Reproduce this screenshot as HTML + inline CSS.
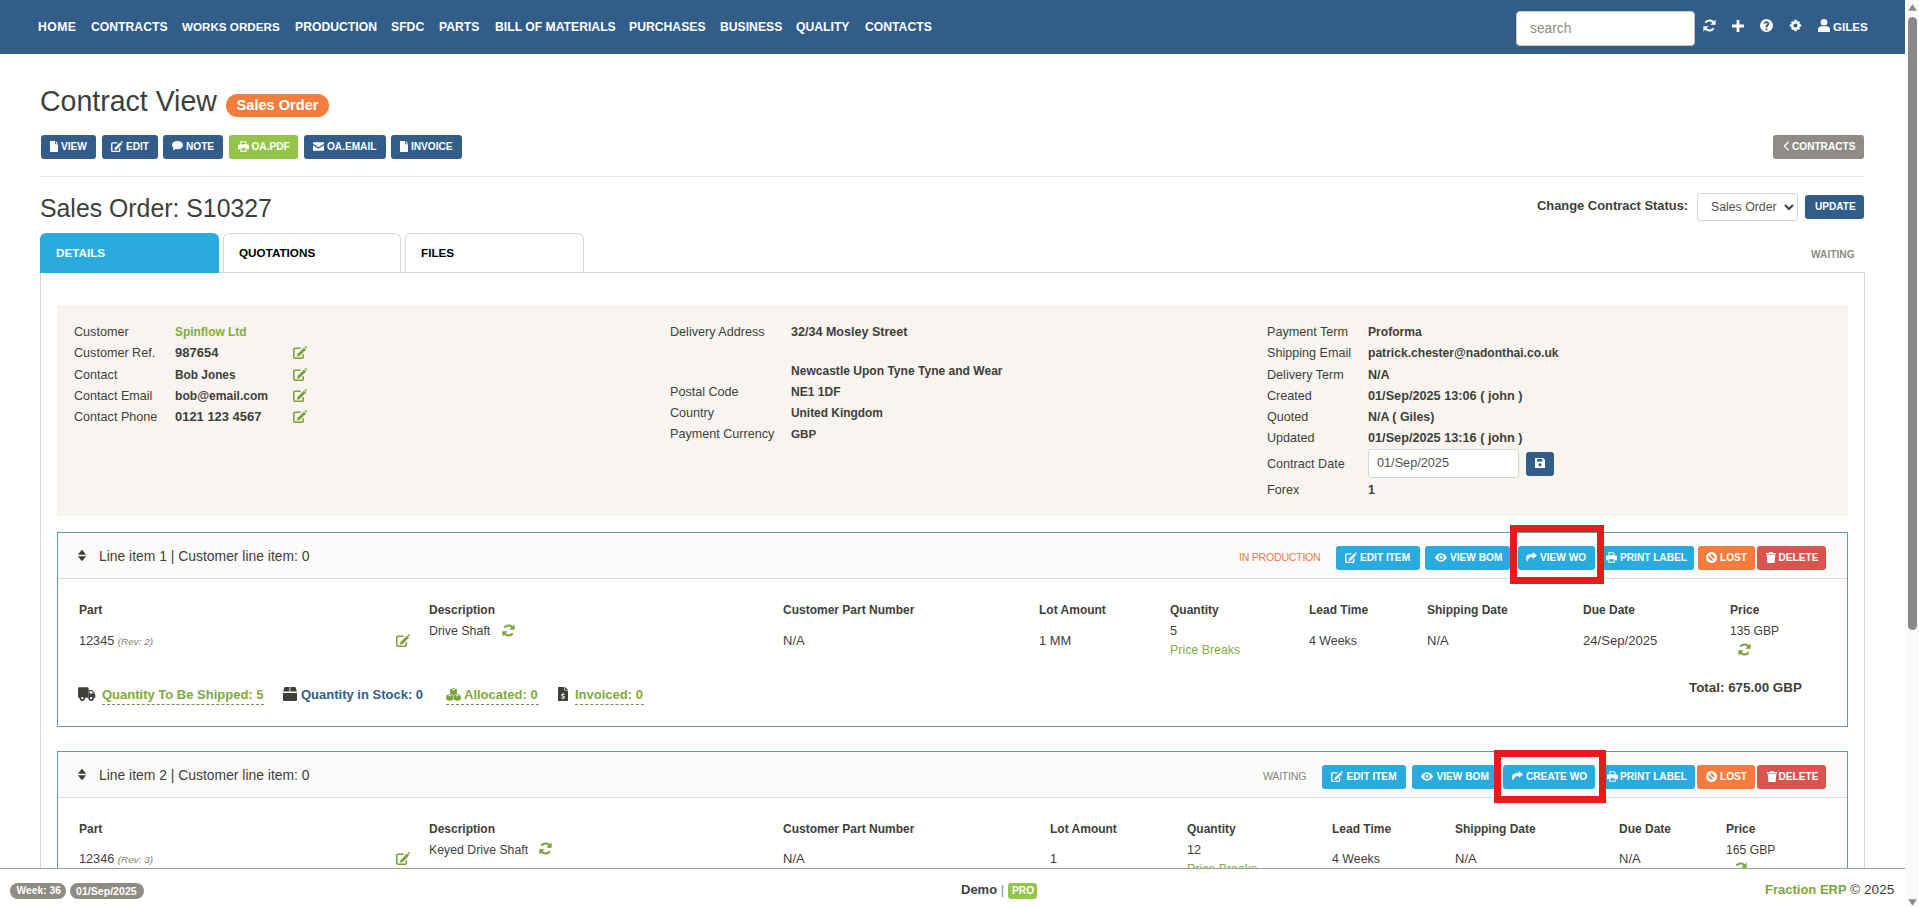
<!DOCTYPE html>
<html><head><meta charset="utf-8">
<style>
*{box-sizing:border-box;margin:0;padding:0}
html,body{width:1919px;height:907px;overflow:hidden;background:#fff;font-family:"Liberation Sans",sans-serif;color:#3e3f3a}
.a{position:absolute;white-space:nowrap}
svg.a{display:block;overflow:visible}
.nv{position:absolute;top:18px;line-height:18px;font-size:12.2px;font-weight:bold;color:#fff;white-space:nowrap}
.btn{position:absolute;border-radius:3px}
.bt{position:absolute;color:#fff;font-weight:bold;white-space:nowrap}
.b-p{background:#325d88}.b-s{background:#93c54b}.b-i{background:#29abe0}.b-w{background:#f47c3c}.b-d{background:#d9534f}.b-g{background:#8e8c84}
.lbl{position:absolute;font-size:12.6px;white-space:nowrap;color:#3e3f3a}
.val{position:absolute;font-size:12.4px;white-space:nowrap;font-weight:bold;color:#3e3f3a}
.th{position:absolute;font-size:12.0px;white-space:nowrap;font-weight:bold;color:#3e3f3a}
.td{position:absolute;font-size:12.7px;white-space:nowrap;color:#3e3f3a}
.grn{color:#82ad3e}
</style></head><body>

<svg width="0" height="0" style="position:absolute">
<defs>
<symbol id="i-file" viewBox="0 0 8 11"><path d="M0 0H5V3.2H8V11H0Z"/><path d="M5.7 0L8 2.4H5.7Z"/></symbol>
<symbol id="i-edit" viewBox="0 0 14 13"><path d="M10.2 8.2V11.2Q10.2 12.2 9.2 12.2H1.8Q0.8 12.2 0.8 11.2V3.3Q0.8 2.3 1.8 2.3H7.6" fill="none" stroke="currentColor" stroke-width="1.6"/><path d="M3.9 10.7L4.5 7.9L11 1.4L13.1 3.5L6.6 10Z"/><path d="M11.6 0.8L12.3 0.1Q12.6 -0.1 12.9 0.2L13.9 1.2Q14.1 1.5 13.9 1.8L13.2 2.5Z"/></symbol>
<symbol id="i-comment" viewBox="0 0 11 10"><ellipse cx="5.5" cy="4.2" rx="5.5" ry="4.1"/><path d="M1.6 6.4L0.8 9.6L4.6 7.8Z"/></symbol>
<symbol id="i-print" viewBox="0 0 11 11"><path d="M2.3 0.3H7.4L8.7 1.6V4H2.3Z M3.3 1.2V3.4H7.7V1.9L7 1.2Z" fill-rule="evenodd"/><path d="M1 3.6H10A1 1 0 0 1 11 4.6V8.2H8.7V6.6H2.3V8.2H0V4.6A1 1 0 0 1 1 3.6Z"/><path d="M2.3 6.2H8.7V10.8H2.3Z M3.3 7.2V9.8H7.7V7.2Z" fill-rule="evenodd"/></symbol>
<symbol id="i-envelope" viewBox="0 0 11 9"><path d="M0 0.3H11V1.8L5.5 5.3L0 1.8Z"/><path d="M0 3.2L5.5 6.7L11 3.2V8.7H0Z"/></symbol>
<symbol id="i-chev" viewBox="0 0 6 10"><path d="M5.2 0.2L6 1.2L2.2 5L6 8.8L5.2 9.8L0.4 5Z"/></symbol>
<symbol id="i-refresh" viewBox="0 0 13 13"><path d="M11.2 5.2A5 5 0 0 0 2.3 3.6" fill="none" stroke="currentColor" stroke-width="2"/><path d="M12.6 0.6V5.8H7.4Z"/><path d="M1.8 7.8A5 5 0 0 0 10.7 9.4" fill="none" stroke="currentColor" stroke-width="2"/><path d="M0.4 12.4V7.2H5.6Z"/></symbol>
<symbol id="i-plus" viewBox="0 0 12 12"><path d="M4.6 0H7.4V4.6H12V7.4H7.4V12H4.6V7.4H0V4.6H4.6Z"/></symbol>
<symbol id="i-question" viewBox="0 0 14 14"><path d="M7 0A7 7 0 1 1 7 14A7 7 0 1 1 7 0Z M6 10.2V12H8V10.2Z M7 2.4C5.2 2.4 4.2 3.4 4 4.8L5.9 5.2C6 4.6 6.3 4.2 7 4.2C7.6 4.2 8 4.6 8 5.1C8 6 6 6.3 6 8.2V9.2H8V8.6C8 7.4 10 7 10 5C10 3.4 8.7 2.4 7 2.4Z" fill-rule="evenodd"/></symbol>
<symbol id="i-cog" viewBox="0 0 14 14"><path d="M5.8 0H8.2L8.6 2.1L10.2 1.2L11.9 2.9L11 4.5L13.1 4.9V7.3L11 7.7L11.9 9.3L10.2 11L8.6 10.1L8.2 12.2H5.8L5.4 10.1L3.8 11L2.1 9.3L3 7.7L0.9 7.3V4.9L3 4.5L2.1 2.9L3.8 1.2L5.4 2.1Z M7 3.9A2.2 2.2 0 1 0 7 8.3A2.2 2.2 0 1 0 7 3.9Z" fill-rule="evenodd" transform="translate(0 0.9)"/></symbol>
<symbol id="i-user" viewBox="0 0 12 13"><circle cx="6" cy="3.3" r="3.3"/><path d="M0 13V10.6C0 8.6 1.6 7.2 3.4 7.2H8.6C10.4 7.2 12 8.6 12 10.6V13Z"/></symbol>
<symbol id="i-sort" viewBox="0 0 8 11"><path d="M3.3 0.4Q4 -0.2 4.7 0.4L7.8 4.2Q8 4.7 7.5 4.7H0.5Q0 4.7 0.2 4.2Z"/><path d="M3.3 10.6Q4 11.2 4.7 10.6L7.8 6.8Q8 6.3 7.5 6.3H0.5Q0 6.3 0.2 6.8Z"/></symbol>
<symbol id="i-truck" viewBox="0 0 18 14"><path d="M1 0.2H9.6Q10.6 0.2 10.6 1.2V10.8H1Q0 10.8 0 9.8V1.2Q0 0.2 1 0.2Z"/><path d="M10.6 3H13.6Q14.2 3 14.6 3.5L16.8 6.2Q17.2 6.7 17.2 7.3V9.8L17.9 10.8H10.6Z M11.6 4H13.4L15.6 6.6H11.6Z" fill-rule="evenodd"/><circle cx="4.3" cy="11.2" r="2.7"/><circle cx="13.1" cy="11.2" r="2.7"/><circle cx="4.3" cy="11.2" r="1.1" fill="#fff"/><circle cx="13.1" cy="11.2" r="1.1" fill="#fff"/></symbol>
<symbol id="i-box" viewBox="0 0 14 14"><path d="M1.6 0H6.5V4.6H0.1Z"/><path d="M7.4 0H12.4L13.9 4.6H7.4Z"/><path d="M0 6.1H14V13Q14 14 13 14H1Q0 14 0 13Z"/></symbol>
<symbol id="i-cubes" viewBox="0 0 15 13"><path d="M3.8 6L0.2 7.6V11.4L3.8 13L7.3 11.4V7.6Z"/><path d="M11.2 6L7.7 7.6V11.4L11.2 13L14.8 11.4V7.6Z"/><path d="M7.5 0L4 1.6V5.6L7.5 7.2L11 5.6V1.6Z"/><path d="M3.8 8.6L2 7.8L3.8 7L5.6 7.8Z M11.2 8.6L9.4 7.8L11.2 7L13 7.8Z M7.5 2.6L5.7 1.8L7.5 1L9.3 1.8Z" fill="#fff"/></symbol>
<symbol id="i-invoice" viewBox="0 0 10 14"><path d="M0 0H6.4V3.6H10V14H0Z"/><path d="M7 0L10 3H7Z"/><path d="M4.4 6.2H5.6V7C6.3 7.1 6.7 7.5 6.8 8.1L5.9 8.3C5.8 8 5.5 7.8 5 7.8C4.6 7.8 4.3 8 4.3 8.3C4.3 9 6.9 8.6 6.9 10.3C6.9 11 6.4 11.4 5.6 11.5V12.3H4.4V11.5C3.7 11.4 3.2 11 3.1 10.3L4 10.1C4.1 10.5 4.5 10.7 5 10.7C5.5 10.7 5.8 10.5 5.8 10.2C5.8 9.4 3.2 9.8 3.2 8.2C3.2 7.5 3.7 7.1 4.4 7Z" fill="#f8f5f0"/></symbol>
<symbol id="i-eye" viewBox="0 0 13 9"><path d="M6.5 0C9.6 0 12 2.4 13 4.5C12 6.6 9.6 9 6.5 9C3.4 9 1 6.6 0 4.5C1 2.4 3.4 0 6.5 0Z M6.5 1.6A2.9 2.9 0 1 0 6.5 7.4A2.9 2.9 0 1 0 6.5 1.6Z" fill-rule="evenodd"/><circle cx="6.5" cy="4.5" r="1.5"/></symbol>
<symbol id="i-share" viewBox="0 0 12 11"><path d="M7.4 0L12 3.9L7.4 7.8V5.6C4.4 5.6 2.3 6.4 1.6 10.6C0.4 9.2 0 7.8 0 6.6C0 3.8 2.4 2.3 7.4 2.3Z"/></symbol>
<symbol id="i-ban" viewBox="0 0 11 11"><path d="M5.5 0A5.5 5.5 0 1 1 5.5 11A5.5 5.5 0 1 1 5.5 0Z M2.6 3.6A3.8 3.8 0 0 0 7.4 8.4Z M3.6 2.6L8.4 7.4A3.8 3.8 0 0 0 3.6 2.6Z" fill-rule="evenodd"/></symbol>
<symbol id="i-trash" viewBox="0 0 10 11"><path d="M3.3 0H6.7L7 1H10V2.4H0V1H3Z"/><path d="M0.7 3H9.3L8.6 11H1.4Z"/></symbol>
<symbol id="i-save" viewBox="0 0 10 10"><path d="M0 0H8L10 2V10H0Z M2 1V3.6H7.4V1Z M5 5.2A1.6 1.6 0 1 0 5 8.4A1.6 1.6 0 1 0 5 5.2Z" fill-rule="evenodd"/></symbol>
</defs></svg>

<div class="a" style="left:0;top:0;width:1905px;height:54px;background:#325d88"></div>
<div class="nv" style="left:38px;letter-spacing:0.45px">HOME</div>
<div class="nv" style="left:91px;">CONTRACTS</div>
<div class="nv" style="left:182px;font-size:11.65px">WORKS ORDERS</div>
<div class="nv" style="left:295px;">PRODUCTION</div>
<div class="nv" style="left:391px;">SFDC</div>
<div class="nv" style="left:439px;">PARTS</div>
<div class="nv" style="left:495px;">BILL OF MATERIALS</div>
<div class="nv" style="left:629px;">PURCHASES</div>
<div class="nv" style="left:720px;">BUSINESS</div>
<div class="nv" style="left:796px;">QUALITY</div>
<div class="nv" style="left:865px;">CONTACTS</div>
<div class="a" style="left:1516px;top:11px;width:179px;height:35px;background:#fff;border-radius:4px;border:1px solid #c8c6c0"></div>
<div class="a" style="left:1530px;top:19.5px;line-height:18px;font-size:13.8px;color:#8f8d86">search</div>
<svg class="a" style="left:1703px;top:19px;color:#fff" width="13" height="13" viewBox="0 0 13 13"><use href="#i-refresh" fill="#fff"/></svg>
<svg class="a" style="left:1732px;top:19.5px;color:#fff" width="12" height="12" viewBox="0 0 12 12"><use href="#i-plus" fill="#fff"/></svg>
<svg class="a" style="left:1760px;top:19px;color:#fff" width="13" height="13" viewBox="0 0 13 13"><use href="#i-question" fill="#fff"/></svg>
<svg class="a" style="left:1789px;top:19px;color:#fff" width="13" height="13" viewBox="0 0 13 13"><use href="#i-cog" fill="#fff"/></svg>
<svg class="a" style="left:1818px;top:19px;color:#fff" width="12" height="13" viewBox="0 0 12 13"><use href="#i-user" fill="#fff"/></svg>
<div class="nv" style="left:1833px;font-size:11.6px">GILES</div>
<div class="a" style="left:1905px;top:0;width:14px;height:907px;background:#fafafa"></div>
<svg class="a" style="left:1908px;top:4px" width="9" height="7" viewBox="0 0 9 7"><path d="M4.5 0.3L8.8 6.7H0.2Z" fill="#898989"/></svg>
<div class="a" style="left:1908px;top:17px;width:9px;height:613px;background:#898989;border-radius:4.5px"></div>
<svg class="a" style="left:1908px;top:899px" width="9" height="7" viewBox="0 0 9 7"><path d="M0.2 0.3H8.8L4.5 6.7Z" fill="#898989"/></svg>
<div class="a" style="left:40px;top:84px;font-size:30px;line-height:34px;color:#3e3f3a;transform:scaleX(0.95);transform-origin:0 50%">Contract View</div>
<div class="a" style="left:226px;top:94px;width:103px;height:23px;border-radius:12px;background:#f47c3c;color:#fff;font-weight:bold;font-size:14.6px;line-height:23px;text-align:center">Sales Order</div>
<div class="btn b-p" style="left:41px;top:135px;width:55px;height:24px"></div>
<svg class="a" style="left:50px;top:140.5px;color:#fff" width="8" height="11" viewBox="0 0 8 11"><use href="#i-file" fill="#fff"/></svg>
<div class="bt" style="left:61px;top:135px;line-height:24px;font-size:10.1px">VIEW</div>
<div class="btn b-p" style="left:102px;top:135px;width:56px;height:24px"></div>
<svg class="a" style="left:111px;top:140.5px;color:#fff" width="12" height="11" viewBox="0 0 12 11"><use href="#i-edit" fill="#fff"/></svg>
<div class="bt" style="left:126px;top:135px;line-height:24px;font-size:10.1px">EDIT</div>
<div class="btn b-p" style="left:163px;top:135px;width:60px;height:24px"></div>
<svg class="a" style="left:172px;top:141.0px;color:#fff" width="11" height="10" viewBox="0 0 11 10"><use href="#i-comment" fill="#fff"/></svg>
<div class="bt" style="left:186px;top:135px;line-height:24px;font-size:10.1px">NOTE</div>
<div class="btn b-s" style="left:229px;top:135px;width:69px;height:24px"></div>
<svg class="a" style="left:238px;top:140.5px;color:#fff" width="11" height="11" viewBox="0 0 11 11"><use href="#i-print" fill="#fff"/></svg>
<div class="bt" style="left:251.5px;top:135px;line-height:24px;font-size:10.1px">OA.PDF</div>
<div class="btn b-p" style="left:304px;top:135px;width:82px;height:24px"></div>
<svg class="a" style="left:313px;top:141.5px;color:#fff" width="11" height="9" viewBox="0 0 11 9"><use href="#i-envelope" fill="#fff"/></svg>
<div class="bt" style="left:327px;top:135px;line-height:24px;font-size:10.1px">OA.EMAIL</div>
<div class="btn b-p" style="left:391px;top:135px;width:71px;height:24px"></div>
<svg class="a" style="left:400px;top:140.5px;color:#fff" width="8" height="11" viewBox="0 0 8 11"><use href="#i-file" fill="#fff"/></svg>
<div class="bt" style="left:411px;top:135px;line-height:24px;font-size:10.1px">INVOICE</div>
<div class="btn b-g" style="left:1773px;top:135px;width:91px;height:24px"></div>
<svg class="a" style="left:1782.5px;top:141.0px;color:#fff" width="6" height="10" viewBox="0 0 6 10"><use href="#i-chev" fill="#fff"/></svg>
<div class="bt" style="left:1792px;top:135px;line-height:24px;font-size:10.1px">CONTRACTS</div>
<div class="a" style="left:40px;top:176px;width:1824px;height:1px;background:#e6e5e3"></div>
<div class="a" style="left:40px;top:192.5px;font-size:26.5px;line-height:30px;color:#3e3f3a;transform:scaleX(0.937);transform-origin:0 50%">Sales Order: S10327</div>
<div class="val" style="left:1537px;top:197px;line-height:18px;font-size:12.9px">Change Contract Status:</div>
<div class="a" style="left:1697px;top:193px;width:101px;height:28px;border:1px solid #d6d4cf;border-radius:3px;background:#fff"></div>
<div class="td" style="left:1711px;top:198px;line-height:18px;font-size:12.3px;color:#52524c">Sales Order</div>
<svg class="a" style="left:1784px;top:204px" width="10" height="7" viewBox="0 0 10 7"><path d="M1 1L5 5L9 1" fill="none" stroke="#3e3f3a" stroke-width="2"/></svg>
<div class="btn b-p" style="left:1805px;top:195px;width:59px;height:24px"></div>
<div class="bt" style="left:1815px;top:195px;line-height:24px;font-size:10.1px">UPDATE</div>
<div class="a" style="left:40px;top:272px;width:1825px;height:700px;border:1px solid #d7d5d1"></div>
<div class="a" style="left:40px;top:233px;width:179px;height:40px;background:#29abe0;border-radius:6px 6px 0 0"></div>
<div class="a" style="left:223px;top:233px;width:178px;height:39px;border:1px solid #d9d7d3;border-bottom:none;border-radius:6px 6px 0 0;background:#fff"></div>
<div class="a" style="left:405px;top:233px;width:179px;height:39px;border:1px solid #d9d7d3;border-bottom:none;border-radius:6px 6px 0 0;background:#fff"></div>
<div class="a" style="left:56px;top:243.7px;line-height:18px;font-weight:bold;font-size:11.7px;color:#fff">DETAILS</div>
<div class="a" style="left:239px;top:243.7px;line-height:18px;font-weight:bold;font-size:11.7px;color:#000">QUOTATIONS</div>
<div class="a" style="left:421px;top:243.7px;line-height:18px;font-weight:bold;font-size:11.7px;color:#000">FILES</div>
<div class="a" style="left:1811px;top:246.3px;line-height:18px;font-weight:bold;font-size:10.2px;color:#8e8c84">WAITING</div>
<div class="a" style="left:57px;top:305px;width:1791px;height:211px;background:#f8f5f0"></div>
<div class="lbl" style="left:74px;top:323px;line-height:18px;">Customer</div>
<div class="val" style="left:175px;top:323px;line-height:18px;font-size:11.95px;color:#82ad3e">Spinflow Ltd</div>
<div class="lbl" style="left:74px;top:344px;line-height:18px;">Customer Ref.</div>
<div class="val" style="left:175px;top:344px;line-height:18px;font-size:13.0px">987654</div>
<svg class="a" style="left:293px;top:346px;color:#7ba23a" width="14" height="13" viewBox="0 0 14 13"><use href="#i-edit" fill="#7ba23a"/></svg>
<div class="lbl" style="left:74px;top:366px;line-height:18px;">Contact</div>
<div class="val" style="left:175px;top:366px;line-height:18px;font-size:11.85px">Bob Jones</div>
<svg class="a" style="left:293px;top:368px;color:#7ba23a" width="14" height="13" viewBox="0 0 14 13"><use href="#i-edit" fill="#7ba23a"/></svg>
<div class="lbl" style="left:74px;top:387px;line-height:18px;">Contact Email</div>
<div class="val" style="left:175px;top:387px;line-height:18px;font-size:12.1px">bob@email.com</div>
<svg class="a" style="left:293px;top:389px;color:#7ba23a" width="14" height="13" viewBox="0 0 14 13"><use href="#i-edit" fill="#7ba23a"/></svg>
<div class="lbl" style="left:74px;top:408px;line-height:18px;">Contact Phone</div>
<div class="val" style="left:175px;top:408px;line-height:18px;font-size:12.95px">0121 123 4567</div>
<svg class="a" style="left:293px;top:410px;color:#7ba23a" width="14" height="13" viewBox="0 0 14 13"><use href="#i-edit" fill="#7ba23a"/></svg>
<div class="lbl" style="left:670px;top:323px;line-height:18px;">Delivery Address</div>
<div class="val" style="left:791px;top:323px;line-height:18px;font-size:12.55px">32/34 Mosley Street</div>
<div class="val" style="left:791px;top:362px;line-height:18px;font-size:12.05px">Newcastle Upon Tyne Tyne and Wear</div>
<div class="lbl" style="left:670px;top:383px;line-height:18px;">Postal Code</div>
<div class="val" style="left:791px;top:383px;line-height:18px;font-size:12.05px">NE1 1DF</div>
<div class="lbl" style="left:670px;top:404px;line-height:18px;">Country</div>
<div class="val" style="left:791px;top:404px;line-height:18px;font-size:11.9px">United Kingdom</div>
<div class="lbl" style="left:670px;top:425px;line-height:18px;">Payment Currency</div>
<div class="val" style="left:791px;top:425px;line-height:18px;font-size:11.7px">GBP</div>
<div class="lbl" style="left:1267px;top:323px;line-height:18px;">Payment Term</div>
<div class="val" style="left:1368px;top:323px;line-height:18px;font-size:12.1px">Proforma</div>
<div class="lbl" style="left:1267px;top:344px;line-height:18px;">Shipping Email</div>
<div class="val" style="left:1368px;top:344px;line-height:18px;font-size:12.1px">patrick.chester@nadonthai.co.uk</div>
<div class="lbl" style="left:1267px;top:366px;line-height:18px;">Delivery Term</div>
<div class="val" style="left:1368px;top:366px;line-height:18px;font-size:12.6px">N/A</div>
<div class="lbl" style="left:1267px;top:387px;line-height:18px;">Created</div>
<div class="val" style="left:1368px;top:387px;line-height:18px;font-size:12.7px">01/Sep/2025 13:06 ( john )</div>
<div class="lbl" style="left:1267px;top:408px;line-height:18px;">Quoted</div>
<div class="val" style="left:1368px;top:408px;line-height:18px;font-size:12.4px">N/A ( Giles)</div>
<div class="lbl" style="left:1267px;top:429px;line-height:18px;">Updated</div>
<div class="val" style="left:1368px;top:429px;line-height:18px;font-size:12.7px">01/Sep/2025 13:16 ( john )</div>
<div class="lbl" style="left:1267px;top:455px;line-height:18px;">Contract Date</div>
<div class="lbl" style="left:1267px;top:481px;line-height:18px;">Forex</div>
<div class="val" style="left:1368px;top:481px;line-height:18px;font-size:12.4px">1</div>
<div class="a" style="left:1368px;top:449px;width:151px;height:29px;border:1px solid #d6d4cf;border-radius:3px;background:#fff"></div>
<div class="td" style="left:1377px;top:453.5px;line-height:18px;font-size:12.7px;color:#52524c">01/Sep/2025</div>
<div class="btn b-p" style="left:1526px;top:452px;width:28px;height:24px"></div>
<svg class="a" style="left:1535px;top:458.0px;color:#fff" width="10" height="10" viewBox="0 0 10 10"><use href="#i-save" fill="#fff"/></svg>
<div class="bt" style="left:0px;top:452px;line-height:24px;font-size:10px"></div>
<div class="a" style="left:57px;top:532px;width:1791px;height:195px;border:1px solid #6298ae;background:#fff"></div>
<div class="a" style="left:58px;top:533px;width:1789px;height:46px;background:#fcfbf9;border-bottom:1px solid #dedcd9"></div>
<svg class="a" style="left:78px;top:550.0px;color:#3e3f3a" width="8" height="11" viewBox="0 0 8 11"><use href="#i-sort" fill="#3e3f3a"/></svg>
<div class="td" style="left:99px;top:546.5px;line-height:18px;font-size:13.9px">Line item 1 | Customer line item: 0</div>
<div class="a" style="left:1239px;top:547.9px;line-height:18px;font-size:10.6px;letter-spacing:-0.25px;color:#e77a45">IN PRODUCTION</div>
<div class="btn b-i" style="left:1336px;top:546px;width:84px;height:24px"></div>
<svg class="a" style="left:1345px;top:551.5px;color:#fff" width="12" height="11" viewBox="0 0 12 11"><use href="#i-edit" fill="#fff"/></svg>
<div class="bt" style="left:1360px;top:546px;line-height:24px;font-size:10.15px">EDIT ITEM</div>
<div class="btn b-i" style="left:1425px;top:546px;width:85px;height:24px"></div>
<svg class="a" style="left:1434.5px;top:552.5px;color:#fff" width="12" height="9" viewBox="0 0 12 9"><use href="#i-eye" fill="#fff"/></svg>
<div class="bt" style="left:1450px;top:546px;line-height:24px;font-size:10.15px">VIEW BOM</div>
<div class="btn b-i" style="left:1518px;top:546px;width:77px;height:24px"></div>
<svg class="a" style="left:1526px;top:552.0px;color:#fff" width="11" height="10" viewBox="0 0 11 10"><use href="#i-share" fill="#fff"/></svg>
<div class="bt" style="left:1540px;top:546px;line-height:24px;font-size:10.15px">VIEW WO</div>
<div class="btn b-i" style="left:1599px;top:546px;width:95px;height:24px"></div>
<svg class="a" style="left:1606px;top:551.5px;color:#fff" width="11" height="11" viewBox="0 0 11 11"><use href="#i-print" fill="#fff"/></svg>
<div class="bt" style="left:1620px;top:546px;line-height:24px;font-size:10.15px">PRINT LABEL</div>
<div class="btn b-w" style="left:1698px;top:546px;width:57px;height:24px"></div>
<svg class="a" style="left:1706px;top:551.5px;color:#fff" width="11" height="11" viewBox="0 0 11 11"><use href="#i-ban" fill="#fff"/></svg>
<div class="bt" style="left:1720px;top:546px;line-height:24px;font-size:10.15px">LOST</div>
<div class="btn b-d" style="left:1757px;top:546px;width:69px;height:24px"></div>
<svg class="a" style="left:1766px;top:551.5px;color:#fff" width="10" height="11" viewBox="0 0 10 11"><use href="#i-trash" fill="#fff"/></svg>
<div class="bt" style="left:1778.5px;top:546px;line-height:24px;font-size:10.15px">DELETE</div>
<div class="th" style="left:79px;top:601px;line-height:18px;">Part</div>
<div class="th" style="left:429px;top:601px;line-height:18px;">Description</div>
<div class="th" style="left:783px;top:601px;line-height:18px;">Customer Part Number</div>
<div class="th" style="left:1039px;top:601px;line-height:18px;">Lot Amount</div>
<div class="th" style="left:1170px;top:601px;line-height:18px;">Quantity</div>
<div class="th" style="left:1309px;top:601px;line-height:18px;">Lead Time</div>
<div class="th" style="left:1427px;top:601px;line-height:18px;">Shipping Date</div>
<div class="th" style="left:1583px;top:601px;line-height:18px;">Due Date</div>
<div class="th" style="left:1730px;top:601px;line-height:18px;">Price</div>
<div class="td" style="left:79px;top:632px;line-height:18px;">12345 <i style="font-size:9.9px;color:#7f7d76">(Rev: 2)</i></div>
<div class="td" style="left:429px;top:622px;line-height:18px;font-size:12.4px">Drive Shaft</div>
<div class="td" style="left:783px;top:632px;line-height:18px;font-size:13px">N/A</div>
<div class="td" style="left:1039px;top:632px;line-height:18px;font-size:12.9px">1 MM</div>
<div class="td" style="left:1170px;top:622px;line-height:18px;">5</div>
<div class="td" style="left:1170px;top:641px;line-height:18px;font-size:12.4px;color:#82ad3e">Price Breaks</div>
<div class="td" style="left:1309px;top:632px;line-height:18px;font-size:12.4px">4 Weeks</div>
<div class="td" style="left:1427px;top:632px;line-height:18px;font-size:13px">N/A</div>
<div class="td" style="left:1583px;top:632px;line-height:18px;font-size:13.1px">24/Sep/2025</div>
<div class="td" style="left:1730px;top:622px;line-height:18px;font-size:12.1px">135 GBP</div>
<svg class="a" style="left:396px;top:634px;color:#7ba23a" width="14" height="13" viewBox="0 0 14 13"><use href="#i-edit" fill="#7ba23a"/></svg>
<svg class="a" style="left:502px;top:624px;color:#7ba23a" width="13" height="13" viewBox="0 0 13 13"><use href="#i-refresh" fill="#7ba23a"/></svg>
<svg class="a" style="left:1738px;top:643px;color:#7ba23a" width="13" height="13" viewBox="0 0 13 13"><use href="#i-refresh" fill="#7ba23a"/></svg>
<div class="val" style="left:1689px;top:678.5px;line-height:18px;font-size:13.4px">Total: 675.00 GBP</div>
<svg class="a" style="left:78px;top:687px;color:#3e3f3a" width="18" height="14" viewBox="0 0 18 14"><use href="#i-truck" fill="#3e3f3a"/></svg>
<div class="val" style="left:102px;top:685.5px;line-height:18px;font-size:13px;color:#80aa3c">Quantity To Be Shipped: 5</div>
<div class="a" style="left:102px;top:704px;width:162px;height:0;border-top:1px dashed #7f8c63"></div>
<svg class="a" style="left:283px;top:687px;color:#3e3f3a" width="14" height="14" viewBox="0 0 14 14"><use href="#i-box" fill="#3e3f3a"/></svg>
<div class="val" style="left:301px;top:685.5px;line-height:18px;font-size:13px;color:#325d88">Quantity in Stock: 0</div>
<svg class="a" style="left:446px;top:688px;color:#7ba23a" width="15" height="13" viewBox="0 0 15 13"><use href="#i-cubes" fill="#7ba23a"/></svg>
<div class="val" style="left:464px;top:685.5px;line-height:18px;font-size:13px;color:#80aa3c">Allocated: 0</div>
<div class="a" style="left:446px;top:704px;width:93px;height:0;border-top:1px dashed #7f8c63"></div>
<svg class="a" style="left:558px;top:687px;color:#3e3f3a" width="10" height="14" viewBox="0 0 10 14"><use href="#i-invoice" fill="#3e3f3a"/></svg>
<div class="val" style="left:575px;top:685.5px;line-height:18px;font-size:13px;color:#80aa3c">Invoiced: 0</div>
<div class="a" style="left:575px;top:704px;width:69px;height:0;border-top:1px dashed #7f8c63"></div>
<div class="a" style="left:1510px;top:525px;width:94px;height:59px;border:7px solid #e41c1c"></div>
<div class="a" style="left:57px;top:751px;width:1791px;height:249px;border:1px solid #6298ae;background:#fff"></div>
<div class="a" style="left:58px;top:752px;width:1789px;height:46px;background:#fcfbf9;border-bottom:1px solid #dedcd9"></div>
<svg class="a" style="left:78px;top:769.0px;color:#3e3f3a" width="8" height="11" viewBox="0 0 8 11"><use href="#i-sort" fill="#3e3f3a"/></svg>
<div class="td" style="left:99px;top:765.5px;line-height:18px;font-size:13.9px">Line item 2 | Customer line item: 0</div>
<div class="a" style="left:1263px;top:766.9px;line-height:18px;font-size:10.6px;letter-spacing:-0.25px;color:#858379">WAITING</div>
<div class="btn b-i" style="left:1322px;top:765px;width:84px;height:24px"></div>
<svg class="a" style="left:1331px;top:770.5px;color:#fff" width="12" height="11" viewBox="0 0 12 11"><use href="#i-edit" fill="#fff"/></svg>
<div class="bt" style="left:1346.5px;top:765px;line-height:24px;font-size:10.15px">EDIT ITEM</div>
<div class="btn b-i" style="left:1412px;top:765px;width:83px;height:24px"></div>
<svg class="a" style="left:1421px;top:771.5px;color:#fff" width="12" height="9" viewBox="0 0 12 9"><use href="#i-eye" fill="#fff"/></svg>
<div class="bt" style="left:1436.5px;top:765px;line-height:24px;font-size:10.15px">VIEW BOM</div>
<div class="btn b-i" style="left:1503px;top:765px;width:92px;height:24px"></div>
<svg class="a" style="left:1512px;top:771.0px;color:#fff" width="11" height="10" viewBox="0 0 11 10"><use href="#i-share" fill="#fff"/></svg>
<div class="bt" style="left:1526px;top:765px;line-height:24px;font-size:10.15px">CREATE WO</div>
<div class="btn b-i" style="left:1599px;top:765px;width:96px;height:24px"></div>
<svg class="a" style="left:1607px;top:770.5px;color:#fff" width="11" height="11" viewBox="0 0 11 11"><use href="#i-print" fill="#fff"/></svg>
<div class="bt" style="left:1620px;top:765px;line-height:24px;font-size:10.15px">PRINT LABEL</div>
<div class="btn b-w" style="left:1697px;top:765px;width:58px;height:24px"></div>
<svg class="a" style="left:1706px;top:770.5px;color:#fff" width="11" height="11" viewBox="0 0 11 11"><use href="#i-ban" fill="#fff"/></svg>
<div class="bt" style="left:1720px;top:765px;line-height:24px;font-size:10.15px">LOST</div>
<div class="btn b-d" style="left:1757px;top:765px;width:69px;height:24px"></div>
<svg class="a" style="left:1766.5px;top:770.5px;color:#fff" width="10" height="11" viewBox="0 0 10 11"><use href="#i-trash" fill="#fff"/></svg>
<div class="bt" style="left:1778.5px;top:765px;line-height:24px;font-size:10.15px">DELETE</div>
<div class="th" style="left:79px;top:820px;line-height:18px;">Part</div>
<div class="th" style="left:429px;top:820px;line-height:18px;">Description</div>
<div class="th" style="left:783px;top:820px;line-height:18px;">Customer Part Number</div>
<div class="th" style="left:1050px;top:820px;line-height:18px;">Lot Amount</div>
<div class="th" style="left:1187px;top:820px;line-height:18px;">Quantity</div>
<div class="th" style="left:1332px;top:820px;line-height:18px;">Lead Time</div>
<div class="th" style="left:1455px;top:820px;line-height:18px;">Shipping Date</div>
<div class="th" style="left:1619px;top:820px;line-height:18px;">Due Date</div>
<div class="th" style="left:1726px;top:820px;line-height:18px;">Price</div>
<div class="td" style="left:79px;top:850px;line-height:18px;">12346 <i style="font-size:9.9px;color:#7f7d76">(Rev: 3)</i></div>
<div class="td" style="left:429px;top:841px;line-height:18px;font-size:12.3px">Keyed Drive Shaft</div>
<div class="td" style="left:783px;top:850px;line-height:18px;font-size:13px">N/A</div>
<div class="td" style="left:1050px;top:850px;line-height:18px;">1</div>
<div class="td" style="left:1187px;top:841px;line-height:18px;">12</div>
<div class="td" style="left:1187px;top:860px;line-height:18px;font-size:12.4px;color:#82ad3e">Price Breaks</div>
<div class="td" style="left:1332px;top:850px;line-height:18px;font-size:12.4px">4 Weeks</div>
<div class="td" style="left:1455px;top:850px;line-height:18px;font-size:13px">N/A</div>
<div class="td" style="left:1619px;top:850px;line-height:18px;font-size:13px">N/A</div>
<div class="td" style="left:1726px;top:841px;line-height:18px;font-size:12.2px">165 GBP</div>
<svg class="a" style="left:396px;top:852px;color:#7ba23a" width="14" height="13" viewBox="0 0 14 13"><use href="#i-edit" fill="#7ba23a"/></svg>
<svg class="a" style="left:539px;top:842px;color:#7ba23a" width="13" height="13" viewBox="0 0 13 13"><use href="#i-refresh" fill="#7ba23a"/></svg>
<svg class="a" style="left:1734px;top:862px;color:#7ba23a" width="13" height="13" viewBox="0 0 13 13"><use href="#i-refresh" fill="#7ba23a"/></svg>
<div class="a" style="left:1494px;top:750px;width:112px;height:53px;border:7px solid #e41c1c"></div>
<div class="a" style="left:0;top:868px;width:1905px;height:39px;background:#fff;border-top:1px solid #9d9d9d"></div>
<div class="a" style="left:10px;top:883px;width:56px;height:16px;border-radius:8px;background:#8e8c84"></div>
<div class="a" style="left:16.5px;top:882px;line-height:18px;font-weight:bold;font-size:10.3px;color:#fff">Week: 36</div>
<div class="a" style="left:70px;top:883px;width:74px;height:16px;border-radius:8px;background:#8e8c84"></div>
<div class="a" style="left:76px;top:882px;line-height:18px;font-weight:bold;font-size:10.6px;color:#fff">01/Sep/2025</div>
<div class="val" style="left:961px;top:881px;line-height:18px;font-size:13px">Demo <span style="font-weight:normal;color:#8e8c84">|</span></div>
<div class="a" style="left:1008px;top:883px;width:29px;height:16px;border-radius:3px;background:#93c54b"></div>
<div class="a" style="left:1012px;top:882px;line-height:18px;font-weight:bold;font-size:10.2px;color:#fff">PRO</div>
<div class="td" style="left:1765px;top:881px;line-height:18px;font-size:13px"><b style="color:#7ba53a;font-size:13px">Fraction ERP</b> <span style="font-size:13.6px">© 2025</span></div>
</body></html>
